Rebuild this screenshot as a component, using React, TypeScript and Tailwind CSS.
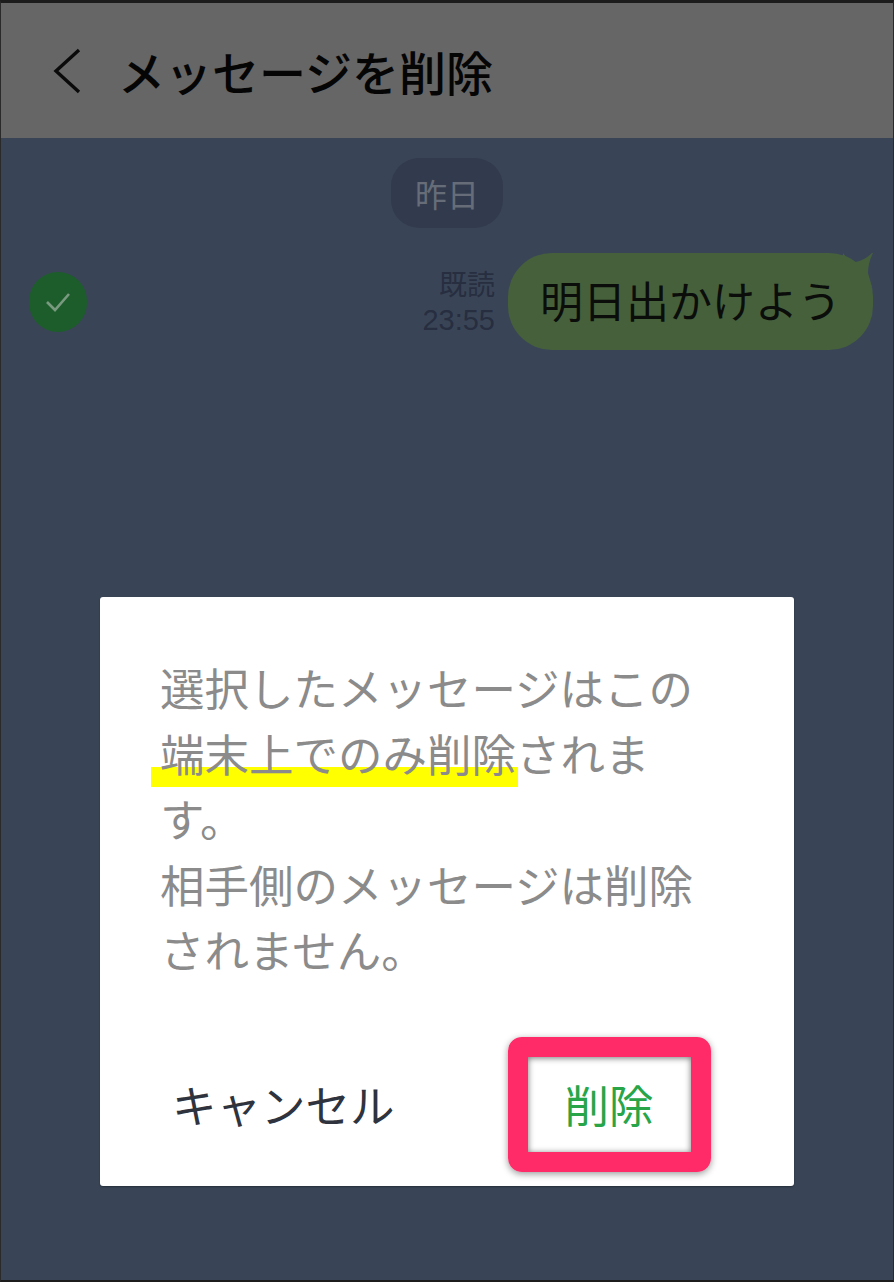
const FONT = "font-['Noto_Sans_CJK_JP','Noto_Sans',sans-serif]";

function BackIcon() {
  return (
    <svg width="30" height="46" viewBox="0 0 30 46" fill="none" stroke="#0a0a0a" strokeWidth="3.4">
      <path d="M27 2 L4 23 L27 44" strokeLinejoin="miter" />
    </svg>
  );
}

function CheckCircle() {
  return (
    <div className="flex h-[60px] w-[58px] items-center justify-center rounded-full bg-[#1d5d2b]">
      <svg width="26" height="22" viewBox="0 0 26 22" fill="none" stroke="#7a9a80" strokeWidth="2.6">
        <path d="M2 11 L10 19 L24 3" />
      </svg>
    </div>
  );
}

function Bubble({ children }: { children: string }) {
  return (
    <div className="relative flex h-[97px] w-[365px] items-center justify-center rounded-[44px] bg-[#46603c] pb-[4px] text-[43px] leading-none text-[#0b0d0a]">
      {children}
      {/* tail */}
      <svg className="absolute right-0 top-0" width="30" height="34" viewBox="0 0 30 34">
        <path d="M0 0 Q6 9 13 9 Q22 7 29 0 L30 0 Q25 10 25 20 L29 34 L0 34 Z" fill="#46603c" />
      </svg>
    </div>
  );
}

export default function App() {
  return (
    <div className={`${FONT} flex h-[1282px] w-[894px] flex-col overflow-hidden border-x border-t-[3px] border-b-2 border-x-[#2a2a2a] border-t-[#1c1c1c] border-b-[#1c1c1c] bg-[#394556]`}>
      <header className="flex h-[135px] shrink-0 items-center bg-[#666666] pl-[51px]">
        <BackIcon />
        <h1 className="ml-[36px] text-[47px] font-medium leading-none text-[#050505]">メッセージを削除</h1>
      </header>

      <main className="flex flex-1 flex-col">
        <div className="mt-5 flex justify-center">
          <div className="flex h-[70px] w-[112px] items-center justify-center rounded-[28px] bg-[#323b4d] text-[32px] leading-none text-[#666d78]">
            昨日
          </div>
        </div>

        <div className="mt-[25px] flex items-center justify-between pl-[28px] pr-5">
          <CheckCircle />
          <div className="flex items-center gap-[13px]">
            <div className="flex flex-col items-end text-[28px] leading-[37px] text-[#272e40]">
              <span>既読</span>
              <span className="text-[29px] font-['Liberation_Sans',sans-serif]">23:55</span>
            </div>
            <Bubble>明日出かけよう</Bubble>
          </div>
        </div>

        <section className="ml-[99px] mt-[247px] flex h-[589px] w-[694px] flex-col rounded-[3px] bg-white shadow-[0_1px_2px_rgba(0,0,0,0.35)]">
          <div className="pl-[60px] pt-[57px] text-[44.5px] leading-[65.5px] text-[#8b8b8b]">
            <p>選択したメッセージはこの</p>
            <p>
              <span className="relative">
                <span className="absolute bottom-[-2px] left-[-9px] right-[-2px] h-[20px] bg-[#ffff00]" />
                <span className="relative">端末上でのみ削除</span>
              </span>
              されま
            </p>
            <p>す。</p>
            <p>相手側のメッセージは削除</p>
            <p>されません。</p>
          </div>

          <div className="mt-auto flex items-center pb-[14px] pl-[72px]">
            <span className="text-[44.5px] leading-none text-[#2e333d]">キャンセル</span>
            <div className="ml-[113px] flex h-[135px] w-[203px] items-center justify-center rounded-[14px] border-[20px] border-[#ff2a68] text-[44.5px] leading-none text-[#27a548] shadow-[0_2px_7px_rgba(0,0,0,0.4),inset_0_1px_6px_rgba(0,0,0,0.55)]">
              削除
            </div>
          </div>
        </section>
      </main>
    </div>
  );
}
